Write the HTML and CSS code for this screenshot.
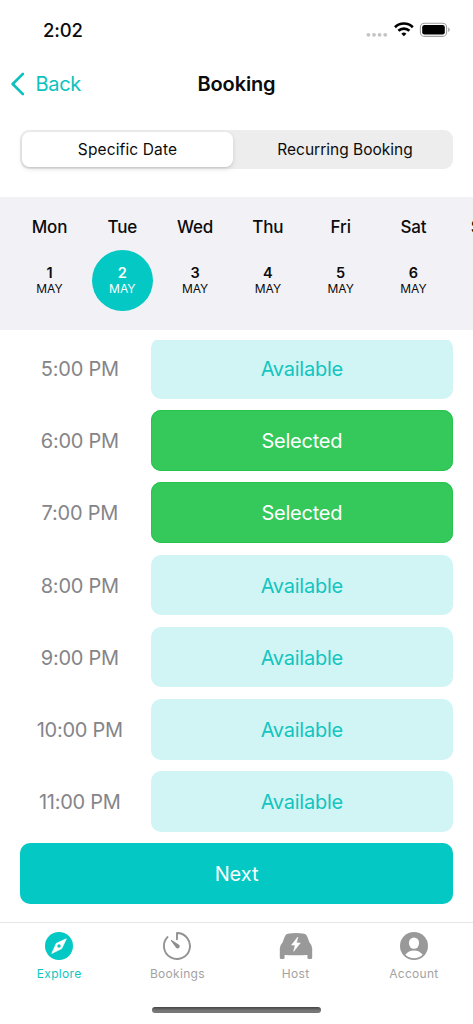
FILE: index.html
```html
<!DOCTYPE html>
<html lang="en">
<head>
<meta charset="utf-8">
<title>Booking</title>
<link rel="stylesheet" href="styles.css">
</head>
<body>
<div class="screen">
  <header class="status">
    <span class="clock">2:02</span>
    <svg class="status-icons" width="88" height="20" viewBox="0 0 88 20">
      <g fill="#c4c4c4"><circle cx="3.4" cy="14.8" r="1.9"/><circle cx="9" cy="14.8" r="1.9"/><circle cx="14.6" cy="14.8" r="1.9"/><circle cx="20.2" cy="14.8" r="1.9"/></g>
      <g fill="none" stroke="#000" stroke-width="2.7">
        <path d="M30 7.2a12.6 12.6 0 0 1 17.8 0"/>
        <path d="M33.4 10.8a7.8 7.8 0 0 1 11 0"/>
      </g>
      <path d="M36.4 13.7a3.7 3.7 0 0 1 5 0L38.9 16.3z" fill="#000"/>
      <rect x="55.4" y="3.2" width="26.2" height="13.2" rx="4" fill="none" stroke="#a0a0a0" stroke-width="1.1"/>
      <rect x="57.2" y="5" width="22.6" height="9.6" rx="2.3" fill="#000"/>
      <path d="M83.2 7.6c2 .7 2 3.7 0 4.4z" fill="#a0a0a0"/>
    </svg>
  </header>
  <nav class="navbar">
    <span class="back">
      <svg width="14" height="24" viewBox="0 0 14 24"><path d="M12.9 1.9L2.7 12l10.2 10.1" fill="none" stroke="#0dc2be" stroke-width="2.7" stroke-linecap="round" stroke-linejoin="round"/></svg>
      <span class="back-label">Back</span>
    </span>
    <h1 class="title">Booking</h1>
  </nav>
  <div class="segments">
    <div class="segment active">Specific Date</div>
    <div class="segment recurring">Recurring Booking</div>
  </div>
  <section class="dates">
    <div class="day"><b class="weekday">Mon</b><div class="date"><b>1</b><span>MAY</span></div></div>
    <div class="day"><b class="weekday">Tue</b><div class="date picked"><b>2</b><span>MAY</span></div></div>
    <div class="day"><b class="weekday">Wed</b><div class="date"><b>3</b><span>MAY</span></div></div>
    <div class="day"><b class="weekday">Thu</b><div class="date"><b>4</b><span>MAY</span></div></div>
    <div class="day"><b class="weekday">Fri</b><div class="date"><b>5</b><span>MAY</span></div></div>
    <div class="day"><b class="weekday">Sat</b><div class="date"><b>6</b><span>MAY</span></div></div>
    <div class="day"><b class="weekday">Sun</b></div>
  </section>
  <main class="slots">
    <div class="slot-list">
      <div class="slot"><span class="time">5:00 PM</span><span class="state available">Available</span></div>
      <div class="slot"><span class="time">6:00 PM</span><span class="state selected">Selected</span></div>
      <div class="slot"><span class="time">7:00 PM</span><span class="state selected">Selected</span></div>
      <div class="slot"><span class="time">8:00 PM</span><span class="state available">Available</span></div>
      <div class="slot"><span class="time">9:00 PM</span><span class="state available">Available</span></div>
      <div class="slot"><span class="time">10:00 PM</span><span class="state available">Available</span></div>
      <div class="slot"><span class="time">11:00 PM</span><span class="state available">Available</span></div>
    </div>
  </main>
  <div class="next">Next</div>
  <footer class="tabs">
    <div class="tab current">
      <svg width="36" height="30" viewBox="0 0 36 30"><circle cx="18" cy="15" r="14" fill="#03c8c4"/><path d="M25.3 7.8L20.7 17.6 10.8 22.4 15.3 12.4z" fill="#fff" stroke="#fff" stroke-width=".8" stroke-linejoin="round"/><circle cx="18" cy="15" r="1.7" fill="#03c8c4"/></svg>
      <span>Explore</span>
    </div>
    <div class="tab">
      <svg width="36" height="30" viewBox="0 0 36 30"><path d="M18 8.2V2A13 13 0 1 1 8.5 6.1" fill="none" stroke="#929292" stroke-width="1.9" stroke-linecap="round" stroke-linejoin="round"/><path d="M11.9 9.2c.2-.3.5-.3.8-.1l6.9 4.5a2 2 0 1 1-2.7 2.8l-5-6.7z" fill="#8d8d8d"/></svg>
      <span>Bookings</span>
    </div>
    <div class="tab">
      <svg width="36" height="30" viewBox="0 0 36 30"><path fill="#999" d="M9.8 2.7Q18 1.5 26.2 2.7Q28.2 3 29 5L31.5 11.4Q34.2 14 34.2 17.5V26.5Q34.2 28 32.7 28H30.9Q29.4 28 29.4 26.5V23.9Q18 24.7 6.6 23.9V26.5Q6.6 28 5.1 28H3.3Q1.8 28 1.8 26.5V17.5Q1.8 14 4.5 11.4L7 5Q7.8 3 9.8 2.7Z"/><path fill="#fff" d="M19.8 6L13.6 14.1H17.2L15.7 20.3L22.3 12H18.5Z" stroke="#fff" stroke-width=".6" stroke-linejoin="round"/></svg>
      <span>Host</span>
    </div>
    <div class="tab">
      <svg width="36" height="30" viewBox="0 0 36 30"><circle cx="18" cy="15" r="14" fill="#999"/><ellipse cx="18" cy="12.1" rx="5.1" ry="5.7" fill="#fff"/><path d="M9.3 23.8c2-2.8 5.2-4.3 8.7-4.3s6.7 1.5 8.7 4.3a12.6 12.6 0 0 1-17.4 0z" fill="#fff"/></svg>
      <span>Account</span>
    </div>
  </footer>
  <div class="home-bar"></div>
</div>
</body>
</html>
```
FILE: styles.css
```css
* { box-sizing: border-box; }
body { margin: 0; background: #fff; color: #0b0b0c; font-family: Inter, "Liberation Sans", sans-serif; }
.screen { width: 473px; height: 1024px; overflow: hidden; display: flex; flex-direction: column; }
.screen > * { flex: none; }
.status { height: 60px; padding: 0 20px 0 43px; display: flex; justify-content: space-between; align-items: center; }
.clock { font-size: 18.5px; font-weight: 500; letter-spacing: -.15px; }
.navbar { height: 48px; display: grid; grid-template-columns: 1fr auto 1fr; align-items: center; padding: 0 10px; }
.back { display: flex; align-items: center; gap: 11.5px; color: #0dc2be; font-size: 20px; letter-spacing: -.3px; }
.title { margin: 0; font-size: 20px; font-weight: 600; letter-spacing: -.15px; }
.segments { height: 39px; margin: 22px 20px 0; padding: 2px; display: grid; grid-template-columns: 211px 1fr; border-radius: 9px; background: #ededed; font-size: 15.5px; line-height: 35px; text-align: center; }
.segment.active { background: #fff; border-radius: 7.5px; box-shadow: 0 2px 5px rgba(0,0,0,.13), 0 1px 1px rgba(0,0,0,.05); letter-spacing: .13px; }
.recurring { padding-left: 6px; }
.dates { height: 133.5px; margin-top: 27.5px; padding: 20px 0 0 13.1px; display: flex; background: #f2f1f6; overflow: hidden; }
.day { width: 72.8px; flex: none; display: flex; flex-direction: column; align-items: center; }
.weekday { font-size: 17px; font-weight: 550; line-height: 20px; letter-spacing: -.1px; }
.date { width: 61px; height: 61px; margin-top: 13px; padding-top: 15px; border-radius: 50%; display: flex; flex-direction: column; align-items: center; font-size: 12px; line-height: 16px; }
.date b { font-size: 14.5px; font-weight: 600; line-height: 16px; }
.picked { background: #03c8c4; color: #fff; }
.slots { height: 503.3px; margin-top: 9.7px; overflow: hidden; }
.slot-list { display: grid; gap: 11.6px; margin-top: -1.6px; }
.slot { height: 60.6px; padding-right: 20px; display: grid; grid-template-columns: 150.6px 1fr; font-size: 20px; line-height: 62px; text-align: center; letter-spacing: -.25px; }
.time { color: #858589; padding-left: 9px; }
.state { height: 60.6px; border-radius: 10px; }
.available { background: #d1f5f5; color: #12c5c0; }
.selected { background: #35c85a; color: #fff; box-shadow: inset 0 0 0 1px #25c54e; }
.next { height: 61px; margin: 0 20px; border-radius: 10px; background: #03c8c4; color: #fff; font-size: 20px; line-height: 62px; text-align: center; letter-spacing: -.1px; }
.tabs { height: 77px; margin-top: 18.5px; padding-top: 8px; border-top: 1.5px solid #e6e6e6; display: grid; grid-template-columns: repeat(4, 1fr); }
.tab { display: flex; flex-direction: column; align-items: center; gap: 5px; color: #a3a3a3; font-size: 12px; line-height: 16px; letter-spacing: .3px; }
.current { color: #10c6c2; }
.home-bar { width: 169px; height: 6px; margin: 8px 0 0 152px; border-radius: 3px; background: linear-gradient(#444, #777 60%, #777); }
```
